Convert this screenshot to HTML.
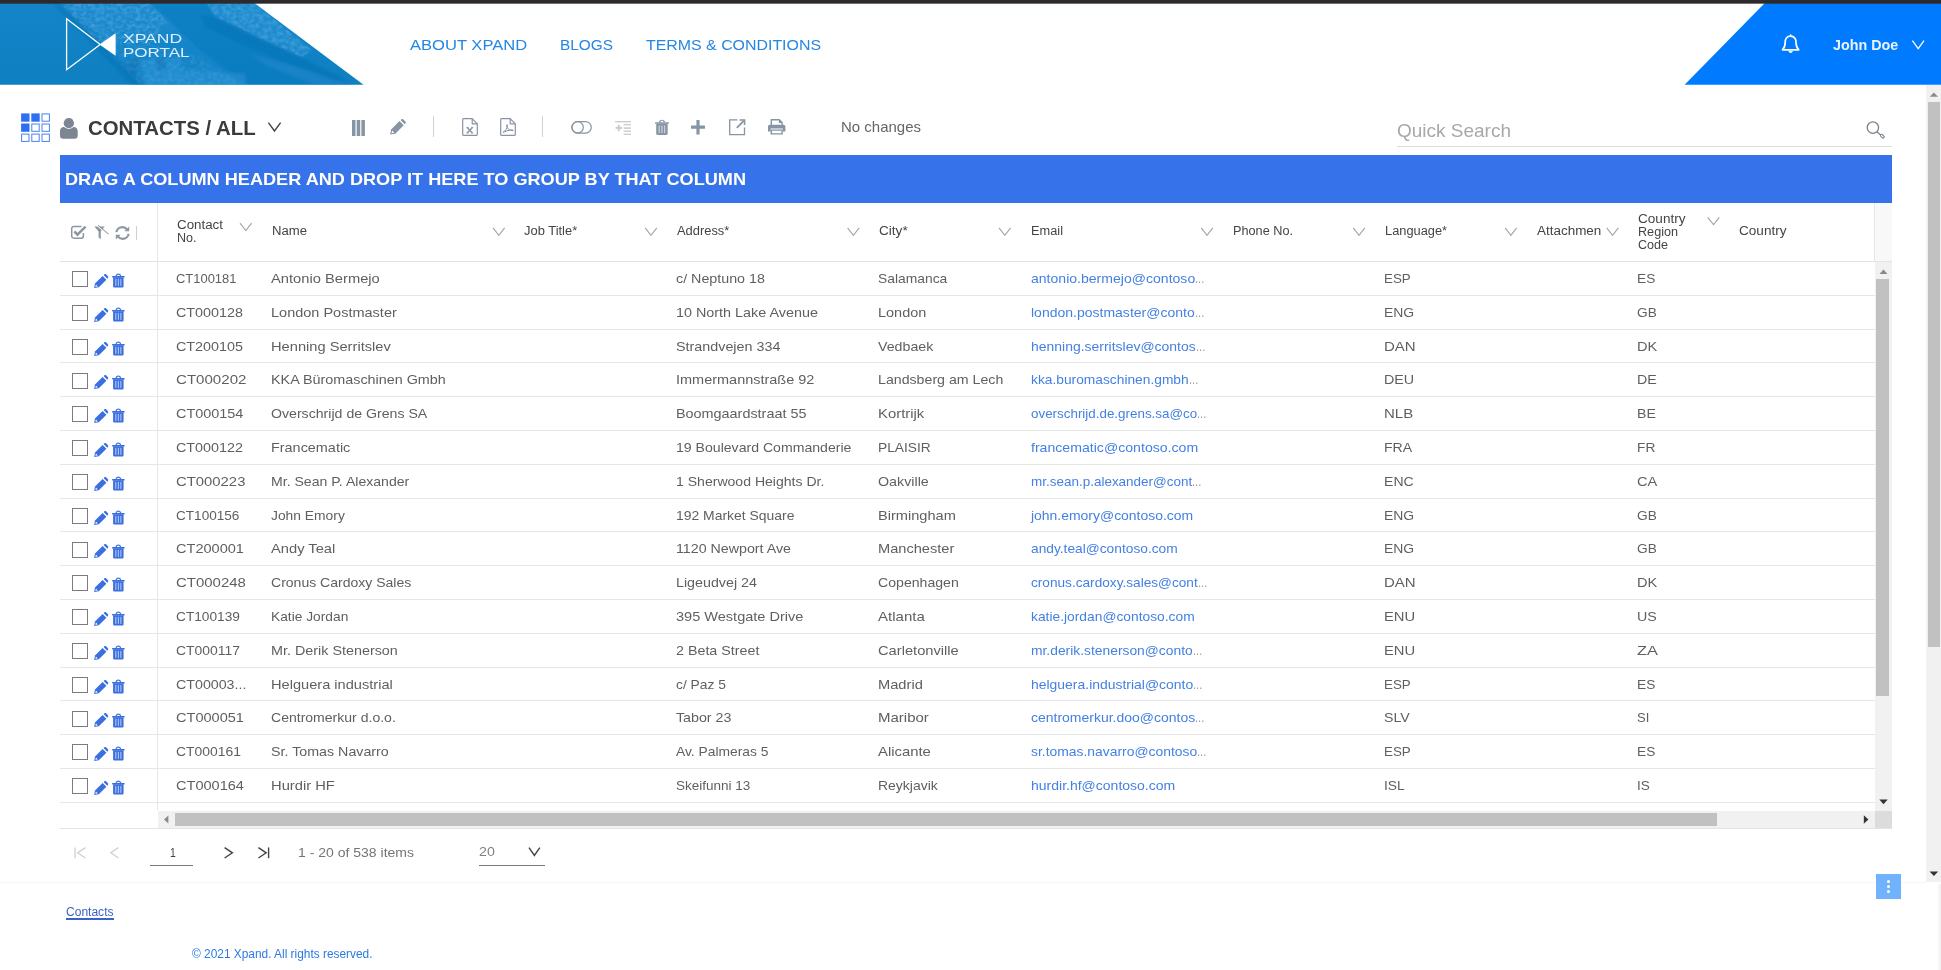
<!DOCTYPE html><html><head><meta charset="utf-8"><title>Contacts</title><style>
html,body{margin:0;padding:0;background:#fff;}html{width:1941px;height:970px;overflow:hidden;}
body{width:1941px;height:970px;overflow:hidden;position:relative;font-family:"Liberation Sans", sans-serif;}
.a{position:absolute;}
.t{position:absolute;white-space:nowrap;line-height:1;transform-origin:0 0;}
svg{position:absolute;overflow:visible;}
</style></head><body>
<svg style="left:0;top:0" width="370" height="86" viewBox="0 0 370 86">
<defs><clipPath id="hc"><polygon points="0,2 253.1,2 363.5,84.8 0,84.8"/></clipPath>
<linearGradient id="hg" x1="0" x2="0" y1="0" y2="1"><stop offset="0" stop-color="#1485c8"/><stop offset="1" stop-color="#0e7fc1"/></linearGradient>
<filter id="sp" x="0" y="0" width="100%" height="100%"><feTurbulence type="fractalNoise" baseFrequency="0.22 0.28" numOctaves="2" seed="7" result="n"/>
<feColorMatrix in="n" type="matrix" values="0 0 0 0 0.35  0 0 0 0 0.66  0 0 0 0 0.92  0 0 0 1.8 -0.62" result="c"/>
<feComposite in="c" in2="SourceAlpha" operator="in"/></filter>
<linearGradient id="bandg" x1="0" x2="0" y1="0" y2="1"><stop offset="0" stop-color="#2b94db" stop-opacity="0.42"/><stop offset="0.55" stop-color="#2590d8" stop-opacity="0.2"/><stop offset="1" stop-color="#2590d8" stop-opacity="0.3"/></linearGradient><filter id="bl"><feGaussianBlur stdDeviation="1.6"/></filter>
</defs>
<g clip-path="url(#hc)">
<rect x="0" y="0" width="370" height="86" fill="url(#hg)"/>
<g filter="url(#bl)">
<polygon points="57,3 150,3 170,22 200,50 245,86 142,86" fill="url(#bandg)"/>
<polygon points="52,3 62,3 148,86 132,86" fill="#0a73b6" opacity="0.5"/>
<polygon points="150,3 205,3 215,16 260,38 300,56 345,80 352,86 250,86 200,50 170,22" fill="#0c78bc" opacity="0.3"/>
<polygon points="207,3 254,3 280,24 312,50 302,57 260,38 215,16" fill="#2f97dc" opacity="0.42"/>
<polygon points="200,14 215,17 260,39 300,57 346,80 336,82 290,64 240,44 206,28" fill="#0a70b2" opacity="0.42"/>
<polygon points="250,54 300,68 352,86 318,86 268,66" fill="#2a90d6" opacity="0.3"/>
<polygon points="140,60 176,58 184,70 245,74 246,86 146,86" fill="#2f98dd" opacity="0.4"/>
<rect x="128" y="58" width="11" height="16" fill="#0b6fb0" opacity="0.5"/>
<rect x="156" y="58" width="10" height="12" fill="#0b6fb0" opacity="0.5"/>
</g>
<polygon points="60,3 150,3 168,22 150,44 100,44" filter="url(#sp)" opacity="0.34"/>
<polygon points="100,44 150,44 200,56 245,86 142,86" filter="url(#sp)" opacity="0.16"/>
<polygon points="207,3 254,3 280,24 312,50 302,57 260,38 215,16" filter="url(#sp)" opacity="0.32"/>
</g>
<polygon points="66.6,18.8 66.6,69.8 100.2,44.4" fill="none" stroke="#fff" stroke-width="1.3" stroke-linejoin="miter"/>
<polygon points="99.5,44.4 115.6,33.2 115.6,55.8" fill="#fff"/>
</svg>
<svg style="left:1680px;top:0" width="261" height="86" viewBox="0 0 261 86">
<polygon points="85.8,2 261,2 261,84.8 4.6,84.8" fill="#007bff"/>
<!-- bell -->
<g transform="translate(101.6,34.6)" fill="none" stroke="#fff" stroke-width="1.7" stroke-linejoin="round" stroke-linecap="round">
<path d="M9 1.6 C5.2 1.6 3.6 4.6 3.6 7.6 C3.6 11.2 2.6 13.4 0.9 15.2 L17.1 15.2 C15.4 13.4 14.4 11.2 14.4 7.6 C14.4 4.6 12.8 1.6 9 1.6 Z"/>
<path d="M9 1.4 L9 0.6"/>
<path d="M6.8 16.4 C7.2 18.9 10.8 18.9 11.2 16.4 Z" fill="#fff" stroke="none"/>
</g>
<!-- chevron -->
<polyline points="232.4,40.6 238.2,48.6 244,40.6" fill="none" stroke="#fff" stroke-width="1.3"/>
</svg>
<div class="a" style="left:0;top:0;width:1941px;height:3px;background:#2e2a2b"></div><div class="a" style="left:0;top:3px;width:1941px;height:1px;background:rgba(46,42,43,0.68)"></div>
<svg style="left:0;top:0" width="60" height="150"><rect x="21.1" y="113.4" width="8.4" height="8.3" fill="#2f6fed"/><rect x="31.3" y="113.4" width="8.4" height="8.3" fill="#2f6fed"/><rect x="42.0" y="113.9" width="7.4" height="7.3" fill="#fff" stroke="#4a82f0" stroke-width="1"/><rect x="21.1" y="123.5" width="8.4" height="8.3" fill="#2f6fed"/><rect x="31.8" y="124.0" width="7.4" height="7.3" fill="#fff" stroke="#4a82f0" stroke-width="1"/><rect x="42.0" y="124.0" width="7.4" height="7.3" fill="#fff" stroke="#4a82f0" stroke-width="1"/><rect x="21.6" y="134.1" width="7.4" height="7.3" fill="#fff" stroke="#4a82f0" stroke-width="1"/><rect x="31.8" y="134.1" width="7.4" height="7.3" fill="#fff" stroke="#4a82f0" stroke-width="1"/><rect x="42.0" y="134.1" width="7.4" height="7.3" fill="#fff" stroke="#4a82f0" stroke-width="1"/></svg>
<svg style="left:59.5px;top:117.5px" width="17.7" height="20.8" viewBox="0 0 18 21" fill="#7c8592">
<circle cx="9" cy="5.2" r="5.2"/>
<path d="M0 13.6 C0 10.4 2.2 9.2 4.2 9.2 C5.4 10.4 7.2 11 9 11 C10.8 11 12.6 10.4 13.8 9.2 C15.8 9.2 18 10.4 18 13.6 L18 18 C18 19.8 16.8 21 15 21 L3 21 C1.2 21 0 19.8 0 18 Z"/>
</svg>
<svg style="left:0;top:0" width="300" height="150"><polyline points="268.4,122.6 274.5,131 280.6,122.6" fill="none" stroke="#444" stroke-width="1.4"/></svg>
<svg style="left:352.3px;top:119.5px" width="13" height="16" fill="#8794a4"><rect x="0" y="0" width="3.5" height="16"/><rect x="4.7" y="0" width="3.5" height="16"/><rect x="9.4" y="0" width="3.5" height="16"/></svg>
<svg style="left:390.2px;top:119.3px" width="15.8" height="15.8" viewBox="0 0 16 16" fill="#8794a4"><path d="M0.2 15.8 L1.1 10.6 L9.6 2.1 L13.9 6.4 L5.4 14.9 Z"/><path d="M10.7 1.1 L11.7 0.3 C12.2 -0.1 13 -0.1 13.5 0.4 L15.6 2.5 C16.1 3 16.1 3.8 15.7 4.3 L14.9 5.3 Z"/><path d="M2.1 11.7 L4.3 13.9 L1.6 14.4 Z" fill="#fff"/></svg>
<div class="a" style="left:433px;top:116.4px;width:1px;height:21px;background:#d2d2d2"></div>
<div class="a" style="left:542.4px;top:116.4px;width:1px;height:21px;background:#d2d2d2"></div>
<svg style="left:461.9px;top:118.1px" width="16" height="18" viewBox="0 0 16 18" fill="none" stroke="#8794a4" stroke-width="1.2" stroke-linejoin="round"><path d="M1.5 0.7 L10.2 0.7 L15.3 5.8 L15.3 16.5 Q15.3 17.3 14.5 17.3 L1.5 17.3 Q0.7 17.3 0.7 16.5 L0.7 1.5 Q0.7 0.7 1.5 0.7 Z"/><path d="M10.2 0.7 L10.2 5.8 L15.3 5.8"/><path d="M5.2 9.4 L10.4 15 M10.4 9.4 L5.2 15" stroke-width="1.4"/><path d="M4.4 9.4 L6.6 9.4 M9.2 9.4 L11.2 9.4 M4.4 15 L6.6 15 M9.2 15 L11.2 15" stroke-width="0.9"/></svg>
<svg style="left:499.8px;top:118.1px" width="16" height="18" viewBox="0 0 16 18" fill="none" stroke="#8794a4" stroke-width="1.2" stroke-linejoin="round"><path d="M1.5 0.7 L10.2 0.7 L15.3 5.8 L15.3 16.5 Q15.3 17.3 14.5 17.3 L1.5 17.3 Q0.7 17.3 0.7 16.5 L0.7 1.5 Q0.7 0.7 1.5 0.7 Z"/><path d="M10.2 0.7 L10.2 5.8 L15.3 5.8"/><path d="M3 14.4 C5.4 13 7.4 10 7.6 7.4 C7.6 6.2 6.4 6.4 6.6 7.8 C7 10.4 9.4 12.8 13 12.6 C13.8 12.2 12.8 11.6 11.4 11.8 C8.4 12.2 5.4 13.2 3 14.4 Z" stroke-width="1"/></svg>
<svg style="left:571px;top:120.6px" width="21.2" height="13.2" viewBox="0 0 22 14" fill="none" stroke="#8794a4" stroke-width="1.3"><rect x="0.7" y="0.7" width="20.6" height="12.1" rx="6.05"/><circle cx="6.8" cy="6.75" r="6.05"/></svg>
<svg style="left:615.1px;top:120.7px" width="16" height="14" viewBox="0 0 16 14" fill="#c9ced4"><rect x="0" y="0" width="16" height="1.4"/><rect x="8.6" y="2.9" width="7.4" height="1.4"/><rect x="8.6" y="6.3" width="7.4" height="1.6"/><rect x="8.6" y="9.5" width="7.4" height="1.4"/><rect x="8.6" y="12.6" width="7.4" height="1.4"/><rect x="0.6" y="5.9" width="6.4" height="2"/><rect x="2.8" y="3.7" width="2" height="6.4"/></svg>
<svg style="left:655.1px;top:119.0px" width="13.9" height="15.9" viewBox="0 0 12.6 15" preserveAspectRatio="none" fill="#8794a4"><path d="M3.5 3.3 C3.5 -0.3 9.1 -0.3 9.1 3.3 L7.9 3.3 C7.9 1.2 4.7 1.2 4.7 3.3 Z"/><rect x="0" y="3" width="12.6" height="1.6" rx="0.5"/><path d="M1.1 4.5 L11.5 4.5 L11.5 13.6 C11.5 14.4 10.9 15 10.1 15 L2.5 15 C1.7 15 1.1 14.4 1.1 13.6 Z"/><rect x="3.3" y="6.1" width="1" height="7.2" fill="#fff" opacity="0.65"/><rect x="5.8" y="6.1" width="1" height="7.2" fill="#fff" opacity="0.65"/><rect x="8.3" y="6.1" width="1" height="7.2" fill="#fff" opacity="0.65"/></svg>
<svg style="left:691.2px;top:119.7px" width="14" height="14.4" viewBox="0 0 14 14.4" fill="#8794a4"><rect x="5.4" y="0" width="3.2" height="14.4" rx="0.5"/><rect x="0" y="5.6" width="14" height="3.2" rx="0.5"/></svg>
<svg style="left:728.6px;top:119.2px" width="16.4" height="16.4" viewBox="0 0 16.4 16.4" fill="none" stroke="#8794a4" stroke-width="1.3"><path d="M8.4 0.9 L0.7 0.9 L0.7 15.7 L15.5 15.7 L15.5 8.4"/><path d="M7.8 8.8 L14.8 1.8" stroke-width="1.7"/><path d="M10.6 0.9 L15.6 0.9 L15.6 5.9" stroke-width="1.5"/></svg>
<svg style="left:768px;top:119.2px" width="17.4" height="15.6" viewBox="0 0 17.4 15.6" fill="#8794a4">
<path d="M2.6 0 L11.6 0 L14.8 3.2 L14.8 6.4 L13.4 6.4 L13.4 3.9 L10.9 3.9 L10.9 1.4 L4 1.4 L4 6.4 L2.6 6.4 Z"/>
<path d="M1.8 5.8 L15.6 5.8 C16.6 5.8 17.4 6.6 17.4 7.6 L17.4 12.4 L14.8 12.4 L14.8 9.6 L2.6 9.6 L2.6 12.4 L0 12.4 L0 7.6 C0 6.6 0.8 5.8 1.8 5.8 Z"/>
<path d="M2.6 10.4 L14.8 10.4 L14.8 15.6 L2.6 15.6 Z M4 11.8 L4 14.2 L13.4 14.2 L13.4 11.8 Z" fill-rule="evenodd"/>
</svg>
<div class="a" style="left:1396.5px;top:145.6px;width:495.5px;height:1.2px;background:#dcdcdc"></div>
<svg style="left:1866px;top:120.4px" width="20" height="19" viewBox="0 0 20 19" fill="none" stroke="#75828a" stroke-width="1.3"><circle cx="6.9" cy="7.6" r="5.7"/><path d="M11 11.7 L14.4 14.9" /><ellipse cx="16.3" cy="16.2" rx="2.3" ry="1.25" transform="rotate(42 16.3 16.2)" stroke-width="1.1"/></svg>
<div class="a" style="left:60px;top:155px;width:1832.4px;height:48.2px;background:#3672e9"></div>
<div class="a" style="left:1875px;top:203.2px;width:17px;height:58px;background:#f8f8f8"></div>
<div class="a" style="left:1874.2px;top:203.2px;width:1px;height:58px;background:#e6e6e6"></div>
<div class="a" style="left:60px;top:260.8px;width:1832px;height:1.4px;background:#e2e2e2"></div>
<div class="a" style="left:157px;top:203.2px;width:1px;height:607px;background:#e6e6e6"></div>
<svg style="left:71px;top:225.2px" width="16" height="14" viewBox="0 0 16 14" fill="none" stroke="#8d97a2">
<path d="M12.4 8 L12.4 11 C12.4 12.3 11.6 13.2 10.2 13.2 L2.9 13.2 C1.6 13.2 0.7 12.3 0.7 11 L0.7 3.6 C0.7 2.3 1.6 1.4 2.9 1.4 L10.4 1.4" stroke-width="1.5"/>
<path d="M3.4 6.4 L6.4 9.6 L14.6 1.6" stroke-width="2.6"/></svg>
<svg style="left:94.4px;top:225px" width="15" height="15" viewBox="0 0 15 15" fill="#8d97a2" stroke="none">
<path d="M0.4 1.6 L10.6 1.6 L6.8 6.4 L6.8 14.2 L4.6 12.4 L4.6 6.4 Z"/>
<path d="M3.6 0.2 L14.6 9.6 L13.9 10.4 L2.9 1 Z" fill="#fff"/>
<path d="M4.4 0 L14.8 8.8 L14.3 9.5 L3.8 0.7 Z"/>
</svg>
<svg style="left:114.8px;top:226px" width="15" height="14" viewBox="0 0 15 14" fill="none" stroke="#8d97a2" stroke-width="2.2">
<path d="M1.4 6.2 C1.8 3.2 4.4 1.2 7.4 1.2 C9.4 1.2 11 2 12.2 3.6"/>
<path d="M13.6 7.8 C13.2 10.8 10.6 12.8 7.6 12.8 C5.6 12.8 4 12 2.8 10.4"/>
<path d="M14.2 0.4 L14.2 5.2 L9.4 5.2 Z" fill="#8d97a2" stroke="none"/>
<path d="M0.8 13.6 L0.8 8.8 L5.6 8.8 Z" fill="#8d97a2" stroke="none"/>
</svg>
<div class="a" style="left:135.6px;top:225.8px;width:1px;height:13.8px;background:#cfcfcf"></div>
<svg style="left:0;top:0" width="1941" height="270"><polyline points="240.0,223.1 245.8,230.5 251.6,223.1" fill="none" stroke="#a4a4a4" stroke-width="1.1"/><polyline points="493.0,227.9 498.8,235.3 504.6,227.9" fill="none" stroke="#a4a4a4" stroke-width="1.1"/><polyline points="645.2,227.9 651.0,235.3 656.8,227.9" fill="none" stroke="#a4a4a4" stroke-width="1.1"/><polyline points="847.6,227.9 853.4,235.3 859.2,227.9" fill="none" stroke="#a4a4a4" stroke-width="1.1"/><polyline points="999.0,227.9 1004.8,235.3 1010.6,227.9" fill="none" stroke="#a4a4a4" stroke-width="1.1"/><polyline points="1201.2,227.9 1207.0,235.3 1212.8,227.9" fill="none" stroke="#a4a4a4" stroke-width="1.1"/><polyline points="1353.2,227.9 1359.0,235.3 1364.8,227.9" fill="none" stroke="#a4a4a4" stroke-width="1.1"/><polyline points="1505.1,227.9 1510.9,235.3 1516.7,227.9" fill="none" stroke="#a4a4a4" stroke-width="1.1"/><polyline points="1606.7,227.9 1612.5,235.3 1618.3,227.9" fill="none" stroke="#a4a4a4" stroke-width="1.1"/><polyline points="1707.7,217.3 1713.5,224.7 1719.3,217.3" fill="none" stroke="#a4a4a4" stroke-width="1.1"/></svg>
<div class="a" style="left:60px;top:294.7px;width:1814.5px;height:1.2px;background:#e6e6e6"></div>
<svg style="left:71px;top:270.0px" width="18" height="18"><rect x="1.5" y="1.5" width="15" height="15" fill="#fff" stroke="#7c7c7c" stroke-width="1"/></svg>
<svg style="left:93.8px;top:273.9px" width="14.3" height="14.3" viewBox="0 0 16 16" fill="#3b6fe0"><path d="M0.2 15.8 L1.1 10.6 L9.6 2.1 L13.9 6.4 L5.4 14.9 Z"/><path d="M10.7 1.1 L11.7 0.3 C12.2 -0.1 13 -0.1 13.5 0.4 L15.6 2.5 C16.1 3 16.1 3.8 15.7 4.3 L14.9 5.3 Z"/><path d="M2.1 11.7 L4.3 13.9 L1.6 14.4 Z" fill="#fff"/></svg>
<svg style="left:112.3px;top:273.2px" width="12.7" height="14.5" viewBox="0 0 12.6 15" preserveAspectRatio="none" fill="#3b6fe0"><path d="M3.5 3.3 C3.5 -0.3 9.1 -0.3 9.1 3.3 L7.9 3.3 C7.9 1.2 4.7 1.2 4.7 3.3 Z"/><rect x="0" y="3" width="12.6" height="1.6" rx="0.5"/><path d="M1.1 4.5 L11.5 4.5 L11.5 13.6 C11.5 14.4 10.9 15 10.1 15 L2.5 15 C1.7 15 1.1 14.4 1.1 13.6 Z"/><rect x="3.3" y="6.1" width="1" height="7.2" fill="#fff" opacity="0.65"/><rect x="5.8" y="6.1" width="1" height="7.2" fill="#fff" opacity="0.65"/><rect x="8.3" y="6.1" width="1" height="7.2" fill="#fff" opacity="0.65"/></svg>
<div class="a" style="left:60px;top:328.5px;width:1814.5px;height:1.2px;background:#e6e6e6"></div>
<svg style="left:71px;top:304.0px" width="18" height="18"><rect x="1.5" y="1.5" width="15" height="15" fill="#fff" stroke="#7c7c7c" stroke-width="1"/></svg>
<svg style="left:93.8px;top:307.7px" width="14.3" height="14.3" viewBox="0 0 16 16" fill="#3b6fe0"><path d="M0.2 15.8 L1.1 10.6 L9.6 2.1 L13.9 6.4 L5.4 14.9 Z"/><path d="M10.7 1.1 L11.7 0.3 C12.2 -0.1 13 -0.1 13.5 0.4 L15.6 2.5 C16.1 3 16.1 3.8 15.7 4.3 L14.9 5.3 Z"/><path d="M2.1 11.7 L4.3 13.9 L1.6 14.4 Z" fill="#fff"/></svg>
<svg style="left:112.3px;top:307.0px" width="12.7" height="14.5" viewBox="0 0 12.6 15" preserveAspectRatio="none" fill="#3b6fe0"><path d="M3.5 3.3 C3.5 -0.3 9.1 -0.3 9.1 3.3 L7.9 3.3 C7.9 1.2 4.7 1.2 4.7 3.3 Z"/><rect x="0" y="3" width="12.6" height="1.6" rx="0.5"/><path d="M1.1 4.5 L11.5 4.5 L11.5 13.6 C11.5 14.4 10.9 15 10.1 15 L2.5 15 C1.7 15 1.1 14.4 1.1 13.6 Z"/><rect x="3.3" y="6.1" width="1" height="7.2" fill="#fff" opacity="0.65"/><rect x="5.8" y="6.1" width="1" height="7.2" fill="#fff" opacity="0.65"/><rect x="8.3" y="6.1" width="1" height="7.2" fill="#fff" opacity="0.65"/></svg>
<div class="a" style="left:60px;top:362.3px;width:1814.5px;height:1.2px;background:#e6e6e6"></div>
<svg style="left:71px;top:338.0px" width="18" height="18"><rect x="1.5" y="1.5" width="15" height="15" fill="#fff" stroke="#7c7c7c" stroke-width="1"/></svg>
<svg style="left:93.8px;top:341.5px" width="14.3" height="14.3" viewBox="0 0 16 16" fill="#3b6fe0"><path d="M0.2 15.8 L1.1 10.6 L9.6 2.1 L13.9 6.4 L5.4 14.9 Z"/><path d="M10.7 1.1 L11.7 0.3 C12.2 -0.1 13 -0.1 13.5 0.4 L15.6 2.5 C16.1 3 16.1 3.8 15.7 4.3 L14.9 5.3 Z"/><path d="M2.1 11.7 L4.3 13.9 L1.6 14.4 Z" fill="#fff"/></svg>
<svg style="left:112.3px;top:340.8px" width="12.7" height="14.5" viewBox="0 0 12.6 15" preserveAspectRatio="none" fill="#3b6fe0"><path d="M3.5 3.3 C3.5 -0.3 9.1 -0.3 9.1 3.3 L7.9 3.3 C7.9 1.2 4.7 1.2 4.7 3.3 Z"/><rect x="0" y="3" width="12.6" height="1.6" rx="0.5"/><path d="M1.1 4.5 L11.5 4.5 L11.5 13.6 C11.5 14.4 10.9 15 10.1 15 L2.5 15 C1.7 15 1.1 14.4 1.1 13.6 Z"/><rect x="3.3" y="6.1" width="1" height="7.2" fill="#fff" opacity="0.65"/><rect x="5.8" y="6.1" width="1" height="7.2" fill="#fff" opacity="0.65"/><rect x="8.3" y="6.1" width="1" height="7.2" fill="#fff" opacity="0.65"/></svg>
<div class="a" style="left:60px;top:396.1px;width:1814.5px;height:1.2px;background:#e6e6e6"></div>
<svg style="left:71px;top:372.0px" width="18" height="18"><rect x="1.5" y="1.5" width="15" height="15" fill="#fff" stroke="#7c7c7c" stroke-width="1"/></svg>
<svg style="left:93.8px;top:375.3px" width="14.3" height="14.3" viewBox="0 0 16 16" fill="#3b6fe0"><path d="M0.2 15.8 L1.1 10.6 L9.6 2.1 L13.9 6.4 L5.4 14.9 Z"/><path d="M10.7 1.1 L11.7 0.3 C12.2 -0.1 13 -0.1 13.5 0.4 L15.6 2.5 C16.1 3 16.1 3.8 15.7 4.3 L14.9 5.3 Z"/><path d="M2.1 11.7 L4.3 13.9 L1.6 14.4 Z" fill="#fff"/></svg>
<svg style="left:112.3px;top:374.6px" width="12.7" height="14.5" viewBox="0 0 12.6 15" preserveAspectRatio="none" fill="#3b6fe0"><path d="M3.5 3.3 C3.5 -0.3 9.1 -0.3 9.1 3.3 L7.9 3.3 C7.9 1.2 4.7 1.2 4.7 3.3 Z"/><rect x="0" y="3" width="12.6" height="1.6" rx="0.5"/><path d="M1.1 4.5 L11.5 4.5 L11.5 13.6 C11.5 14.4 10.9 15 10.1 15 L2.5 15 C1.7 15 1.1 14.4 1.1 13.6 Z"/><rect x="3.3" y="6.1" width="1" height="7.2" fill="#fff" opacity="0.65"/><rect x="5.8" y="6.1" width="1" height="7.2" fill="#fff" opacity="0.65"/><rect x="8.3" y="6.1" width="1" height="7.2" fill="#fff" opacity="0.65"/></svg>
<div class="a" style="left:60px;top:429.9px;width:1814.5px;height:1.2px;background:#e6e6e6"></div>
<svg style="left:71px;top:405.0px" width="18" height="18"><rect x="1.5" y="1.5" width="15" height="15" fill="#fff" stroke="#7c7c7c" stroke-width="1"/></svg>
<svg style="left:93.8px;top:409.1px" width="14.3" height="14.3" viewBox="0 0 16 16" fill="#3b6fe0"><path d="M0.2 15.8 L1.1 10.6 L9.6 2.1 L13.9 6.4 L5.4 14.9 Z"/><path d="M10.7 1.1 L11.7 0.3 C12.2 -0.1 13 -0.1 13.5 0.4 L15.6 2.5 C16.1 3 16.1 3.8 15.7 4.3 L14.9 5.3 Z"/><path d="M2.1 11.7 L4.3 13.9 L1.6 14.4 Z" fill="#fff"/></svg>
<svg style="left:112.3px;top:408.4px" width="12.7" height="14.5" viewBox="0 0 12.6 15" preserveAspectRatio="none" fill="#3b6fe0"><path d="M3.5 3.3 C3.5 -0.3 9.1 -0.3 9.1 3.3 L7.9 3.3 C7.9 1.2 4.7 1.2 4.7 3.3 Z"/><rect x="0" y="3" width="12.6" height="1.6" rx="0.5"/><path d="M1.1 4.5 L11.5 4.5 L11.5 13.6 C11.5 14.4 10.9 15 10.1 15 L2.5 15 C1.7 15 1.1 14.4 1.1 13.6 Z"/><rect x="3.3" y="6.1" width="1" height="7.2" fill="#fff" opacity="0.65"/><rect x="5.8" y="6.1" width="1" height="7.2" fill="#fff" opacity="0.65"/><rect x="8.3" y="6.1" width="1" height="7.2" fill="#fff" opacity="0.65"/></svg>
<div class="a" style="left:60px;top:463.7px;width:1814.5px;height:1.2px;background:#e6e6e6"></div>
<svg style="left:71px;top:439.0px" width="18" height="18"><rect x="1.5" y="1.5" width="15" height="15" fill="#fff" stroke="#7c7c7c" stroke-width="1"/></svg>
<svg style="left:93.8px;top:442.9px" width="14.3" height="14.3" viewBox="0 0 16 16" fill="#3b6fe0"><path d="M0.2 15.8 L1.1 10.6 L9.6 2.1 L13.9 6.4 L5.4 14.9 Z"/><path d="M10.7 1.1 L11.7 0.3 C12.2 -0.1 13 -0.1 13.5 0.4 L15.6 2.5 C16.1 3 16.1 3.8 15.7 4.3 L14.9 5.3 Z"/><path d="M2.1 11.7 L4.3 13.9 L1.6 14.4 Z" fill="#fff"/></svg>
<svg style="left:112.3px;top:442.2px" width="12.7" height="14.5" viewBox="0 0 12.6 15" preserveAspectRatio="none" fill="#3b6fe0"><path d="M3.5 3.3 C3.5 -0.3 9.1 -0.3 9.1 3.3 L7.9 3.3 C7.9 1.2 4.7 1.2 4.7 3.3 Z"/><rect x="0" y="3" width="12.6" height="1.6" rx="0.5"/><path d="M1.1 4.5 L11.5 4.5 L11.5 13.6 C11.5 14.4 10.9 15 10.1 15 L2.5 15 C1.7 15 1.1 14.4 1.1 13.6 Z"/><rect x="3.3" y="6.1" width="1" height="7.2" fill="#fff" opacity="0.65"/><rect x="5.8" y="6.1" width="1" height="7.2" fill="#fff" opacity="0.65"/><rect x="8.3" y="6.1" width="1" height="7.2" fill="#fff" opacity="0.65"/></svg>
<div class="a" style="left:60px;top:497.5px;width:1814.5px;height:1.2px;background:#e6e6e6"></div>
<svg style="left:71px;top:473.0px" width="18" height="18"><rect x="1.5" y="1.5" width="15" height="15" fill="#fff" stroke="#7c7c7c" stroke-width="1"/></svg>
<svg style="left:93.8px;top:476.7px" width="14.3" height="14.3" viewBox="0 0 16 16" fill="#3b6fe0"><path d="M0.2 15.8 L1.1 10.6 L9.6 2.1 L13.9 6.4 L5.4 14.9 Z"/><path d="M10.7 1.1 L11.7 0.3 C12.2 -0.1 13 -0.1 13.5 0.4 L15.6 2.5 C16.1 3 16.1 3.8 15.7 4.3 L14.9 5.3 Z"/><path d="M2.1 11.7 L4.3 13.9 L1.6 14.4 Z" fill="#fff"/></svg>
<svg style="left:112.3px;top:476.0px" width="12.7" height="14.5" viewBox="0 0 12.6 15" preserveAspectRatio="none" fill="#3b6fe0"><path d="M3.5 3.3 C3.5 -0.3 9.1 -0.3 9.1 3.3 L7.9 3.3 C7.9 1.2 4.7 1.2 4.7 3.3 Z"/><rect x="0" y="3" width="12.6" height="1.6" rx="0.5"/><path d="M1.1 4.5 L11.5 4.5 L11.5 13.6 C11.5 14.4 10.9 15 10.1 15 L2.5 15 C1.7 15 1.1 14.4 1.1 13.6 Z"/><rect x="3.3" y="6.1" width="1" height="7.2" fill="#fff" opacity="0.65"/><rect x="5.8" y="6.1" width="1" height="7.2" fill="#fff" opacity="0.65"/><rect x="8.3" y="6.1" width="1" height="7.2" fill="#fff" opacity="0.65"/></svg>
<div class="a" style="left:60px;top:531.3px;width:1814.5px;height:1.2px;background:#e6e6e6"></div>
<svg style="left:71px;top:507.0px" width="18" height="18"><rect x="1.5" y="1.5" width="15" height="15" fill="#fff" stroke="#7c7c7c" stroke-width="1"/></svg>
<svg style="left:93.8px;top:510.5px" width="14.3" height="14.3" viewBox="0 0 16 16" fill="#3b6fe0"><path d="M0.2 15.8 L1.1 10.6 L9.6 2.1 L13.9 6.4 L5.4 14.9 Z"/><path d="M10.7 1.1 L11.7 0.3 C12.2 -0.1 13 -0.1 13.5 0.4 L15.6 2.5 C16.1 3 16.1 3.8 15.7 4.3 L14.9 5.3 Z"/><path d="M2.1 11.7 L4.3 13.9 L1.6 14.4 Z" fill="#fff"/></svg>
<svg style="left:112.3px;top:509.8px" width="12.7" height="14.5" viewBox="0 0 12.6 15" preserveAspectRatio="none" fill="#3b6fe0"><path d="M3.5 3.3 C3.5 -0.3 9.1 -0.3 9.1 3.3 L7.9 3.3 C7.9 1.2 4.7 1.2 4.7 3.3 Z"/><rect x="0" y="3" width="12.6" height="1.6" rx="0.5"/><path d="M1.1 4.5 L11.5 4.5 L11.5 13.6 C11.5 14.4 10.9 15 10.1 15 L2.5 15 C1.7 15 1.1 14.4 1.1 13.6 Z"/><rect x="3.3" y="6.1" width="1" height="7.2" fill="#fff" opacity="0.65"/><rect x="5.8" y="6.1" width="1" height="7.2" fill="#fff" opacity="0.65"/><rect x="8.3" y="6.1" width="1" height="7.2" fill="#fff" opacity="0.65"/></svg>
<div class="a" style="left:60px;top:565.1px;width:1814.5px;height:1.2px;background:#e6e6e6"></div>
<svg style="left:71px;top:541.0px" width="18" height="18"><rect x="1.5" y="1.5" width="15" height="15" fill="#fff" stroke="#7c7c7c" stroke-width="1"/></svg>
<svg style="left:93.8px;top:544.3px" width="14.3" height="14.3" viewBox="0 0 16 16" fill="#3b6fe0"><path d="M0.2 15.8 L1.1 10.6 L9.6 2.1 L13.9 6.4 L5.4 14.9 Z"/><path d="M10.7 1.1 L11.7 0.3 C12.2 -0.1 13 -0.1 13.5 0.4 L15.6 2.5 C16.1 3 16.1 3.8 15.7 4.3 L14.9 5.3 Z"/><path d="M2.1 11.7 L4.3 13.9 L1.6 14.4 Z" fill="#fff"/></svg>
<svg style="left:112.3px;top:543.6px" width="12.7" height="14.5" viewBox="0 0 12.6 15" preserveAspectRatio="none" fill="#3b6fe0"><path d="M3.5 3.3 C3.5 -0.3 9.1 -0.3 9.1 3.3 L7.9 3.3 C7.9 1.2 4.7 1.2 4.7 3.3 Z"/><rect x="0" y="3" width="12.6" height="1.6" rx="0.5"/><path d="M1.1 4.5 L11.5 4.5 L11.5 13.6 C11.5 14.4 10.9 15 10.1 15 L2.5 15 C1.7 15 1.1 14.4 1.1 13.6 Z"/><rect x="3.3" y="6.1" width="1" height="7.2" fill="#fff" opacity="0.65"/><rect x="5.8" y="6.1" width="1" height="7.2" fill="#fff" opacity="0.65"/><rect x="8.3" y="6.1" width="1" height="7.2" fill="#fff" opacity="0.65"/></svg>
<div class="a" style="left:60px;top:598.9px;width:1814.5px;height:1.2px;background:#e6e6e6"></div>
<svg style="left:71px;top:574.0px" width="18" height="18"><rect x="1.5" y="1.5" width="15" height="15" fill="#fff" stroke="#7c7c7c" stroke-width="1"/></svg>
<svg style="left:93.8px;top:578.1px" width="14.3" height="14.3" viewBox="0 0 16 16" fill="#3b6fe0"><path d="M0.2 15.8 L1.1 10.6 L9.6 2.1 L13.9 6.4 L5.4 14.9 Z"/><path d="M10.7 1.1 L11.7 0.3 C12.2 -0.1 13 -0.1 13.5 0.4 L15.6 2.5 C16.1 3 16.1 3.8 15.7 4.3 L14.9 5.3 Z"/><path d="M2.1 11.7 L4.3 13.9 L1.6 14.4 Z" fill="#fff"/></svg>
<svg style="left:112.3px;top:577.4px" width="12.7" height="14.5" viewBox="0 0 12.6 15" preserveAspectRatio="none" fill="#3b6fe0"><path d="M3.5 3.3 C3.5 -0.3 9.1 -0.3 9.1 3.3 L7.9 3.3 C7.9 1.2 4.7 1.2 4.7 3.3 Z"/><rect x="0" y="3" width="12.6" height="1.6" rx="0.5"/><path d="M1.1 4.5 L11.5 4.5 L11.5 13.6 C11.5 14.4 10.9 15 10.1 15 L2.5 15 C1.7 15 1.1 14.4 1.1 13.6 Z"/><rect x="3.3" y="6.1" width="1" height="7.2" fill="#fff" opacity="0.65"/><rect x="5.8" y="6.1" width="1" height="7.2" fill="#fff" opacity="0.65"/><rect x="8.3" y="6.1" width="1" height="7.2" fill="#fff" opacity="0.65"/></svg>
<div class="a" style="left:60px;top:632.7px;width:1814.5px;height:1.2px;background:#e6e6e6"></div>
<svg style="left:71px;top:608.0px" width="18" height="18"><rect x="1.5" y="1.5" width="15" height="15" fill="#fff" stroke="#7c7c7c" stroke-width="1"/></svg>
<svg style="left:93.8px;top:611.9px" width="14.3" height="14.3" viewBox="0 0 16 16" fill="#3b6fe0"><path d="M0.2 15.8 L1.1 10.6 L9.6 2.1 L13.9 6.4 L5.4 14.9 Z"/><path d="M10.7 1.1 L11.7 0.3 C12.2 -0.1 13 -0.1 13.5 0.4 L15.6 2.5 C16.1 3 16.1 3.8 15.7 4.3 L14.9 5.3 Z"/><path d="M2.1 11.7 L4.3 13.9 L1.6 14.4 Z" fill="#fff"/></svg>
<svg style="left:112.3px;top:611.2px" width="12.7" height="14.5" viewBox="0 0 12.6 15" preserveAspectRatio="none" fill="#3b6fe0"><path d="M3.5 3.3 C3.5 -0.3 9.1 -0.3 9.1 3.3 L7.9 3.3 C7.9 1.2 4.7 1.2 4.7 3.3 Z"/><rect x="0" y="3" width="12.6" height="1.6" rx="0.5"/><path d="M1.1 4.5 L11.5 4.5 L11.5 13.6 C11.5 14.4 10.9 15 10.1 15 L2.5 15 C1.7 15 1.1 14.4 1.1 13.6 Z"/><rect x="3.3" y="6.1" width="1" height="7.2" fill="#fff" opacity="0.65"/><rect x="5.8" y="6.1" width="1" height="7.2" fill="#fff" opacity="0.65"/><rect x="8.3" y="6.1" width="1" height="7.2" fill="#fff" opacity="0.65"/></svg>
<div class="a" style="left:60px;top:666.5px;width:1814.5px;height:1.2px;background:#e6e6e6"></div>
<svg style="left:71px;top:642.0px" width="18" height="18"><rect x="1.5" y="1.5" width="15" height="15" fill="#fff" stroke="#7c7c7c" stroke-width="1"/></svg>
<svg style="left:93.8px;top:645.7px" width="14.3" height="14.3" viewBox="0 0 16 16" fill="#3b6fe0"><path d="M0.2 15.8 L1.1 10.6 L9.6 2.1 L13.9 6.4 L5.4 14.9 Z"/><path d="M10.7 1.1 L11.7 0.3 C12.2 -0.1 13 -0.1 13.5 0.4 L15.6 2.5 C16.1 3 16.1 3.8 15.7 4.3 L14.9 5.3 Z"/><path d="M2.1 11.7 L4.3 13.9 L1.6 14.4 Z" fill="#fff"/></svg>
<svg style="left:112.3px;top:645.0px" width="12.7" height="14.5" viewBox="0 0 12.6 15" preserveAspectRatio="none" fill="#3b6fe0"><path d="M3.5 3.3 C3.5 -0.3 9.1 -0.3 9.1 3.3 L7.9 3.3 C7.9 1.2 4.7 1.2 4.7 3.3 Z"/><rect x="0" y="3" width="12.6" height="1.6" rx="0.5"/><path d="M1.1 4.5 L11.5 4.5 L11.5 13.6 C11.5 14.4 10.9 15 10.1 15 L2.5 15 C1.7 15 1.1 14.4 1.1 13.6 Z"/><rect x="3.3" y="6.1" width="1" height="7.2" fill="#fff" opacity="0.65"/><rect x="5.8" y="6.1" width="1" height="7.2" fill="#fff" opacity="0.65"/><rect x="8.3" y="6.1" width="1" height="7.2" fill="#fff" opacity="0.65"/></svg>
<div class="a" style="left:60px;top:700.3px;width:1814.5px;height:1.2px;background:#e6e6e6"></div>
<svg style="left:71px;top:676.0px" width="18" height="18"><rect x="1.5" y="1.5" width="15" height="15" fill="#fff" stroke="#7c7c7c" stroke-width="1"/></svg>
<svg style="left:93.8px;top:679.5px" width="14.3" height="14.3" viewBox="0 0 16 16" fill="#3b6fe0"><path d="M0.2 15.8 L1.1 10.6 L9.6 2.1 L13.9 6.4 L5.4 14.9 Z"/><path d="M10.7 1.1 L11.7 0.3 C12.2 -0.1 13 -0.1 13.5 0.4 L15.6 2.5 C16.1 3 16.1 3.8 15.7 4.3 L14.9 5.3 Z"/><path d="M2.1 11.7 L4.3 13.9 L1.6 14.4 Z" fill="#fff"/></svg>
<svg style="left:112.3px;top:678.8px" width="12.7" height="14.5" viewBox="0 0 12.6 15" preserveAspectRatio="none" fill="#3b6fe0"><path d="M3.5 3.3 C3.5 -0.3 9.1 -0.3 9.1 3.3 L7.9 3.3 C7.9 1.2 4.7 1.2 4.7 3.3 Z"/><rect x="0" y="3" width="12.6" height="1.6" rx="0.5"/><path d="M1.1 4.5 L11.5 4.5 L11.5 13.6 C11.5 14.4 10.9 15 10.1 15 L2.5 15 C1.7 15 1.1 14.4 1.1 13.6 Z"/><rect x="3.3" y="6.1" width="1" height="7.2" fill="#fff" opacity="0.65"/><rect x="5.8" y="6.1" width="1" height="7.2" fill="#fff" opacity="0.65"/><rect x="8.3" y="6.1" width="1" height="7.2" fill="#fff" opacity="0.65"/></svg>
<div class="a" style="left:60px;top:734.1px;width:1814.5px;height:1.2px;background:#e6e6e6"></div>
<svg style="left:71px;top:710.0px" width="18" height="18"><rect x="1.5" y="1.5" width="15" height="15" fill="#fff" stroke="#7c7c7c" stroke-width="1"/></svg>
<svg style="left:93.8px;top:713.3px" width="14.3" height="14.3" viewBox="0 0 16 16" fill="#3b6fe0"><path d="M0.2 15.8 L1.1 10.6 L9.6 2.1 L13.9 6.4 L5.4 14.9 Z"/><path d="M10.7 1.1 L11.7 0.3 C12.2 -0.1 13 -0.1 13.5 0.4 L15.6 2.5 C16.1 3 16.1 3.8 15.7 4.3 L14.9 5.3 Z"/><path d="M2.1 11.7 L4.3 13.9 L1.6 14.4 Z" fill="#fff"/></svg>
<svg style="left:112.3px;top:712.6px" width="12.7" height="14.5" viewBox="0 0 12.6 15" preserveAspectRatio="none" fill="#3b6fe0"><path d="M3.5 3.3 C3.5 -0.3 9.1 -0.3 9.1 3.3 L7.9 3.3 C7.9 1.2 4.7 1.2 4.7 3.3 Z"/><rect x="0" y="3" width="12.6" height="1.6" rx="0.5"/><path d="M1.1 4.5 L11.5 4.5 L11.5 13.6 C11.5 14.4 10.9 15 10.1 15 L2.5 15 C1.7 15 1.1 14.4 1.1 13.6 Z"/><rect x="3.3" y="6.1" width="1" height="7.2" fill="#fff" opacity="0.65"/><rect x="5.8" y="6.1" width="1" height="7.2" fill="#fff" opacity="0.65"/><rect x="8.3" y="6.1" width="1" height="7.2" fill="#fff" opacity="0.65"/></svg>
<div class="a" style="left:60px;top:767.9px;width:1814.5px;height:1.2px;background:#e6e6e6"></div>
<svg style="left:71px;top:743.0px" width="18" height="18"><rect x="1.5" y="1.5" width="15" height="15" fill="#fff" stroke="#7c7c7c" stroke-width="1"/></svg>
<svg style="left:93.8px;top:747.1px" width="14.3" height="14.3" viewBox="0 0 16 16" fill="#3b6fe0"><path d="M0.2 15.8 L1.1 10.6 L9.6 2.1 L13.9 6.4 L5.4 14.9 Z"/><path d="M10.7 1.1 L11.7 0.3 C12.2 -0.1 13 -0.1 13.5 0.4 L15.6 2.5 C16.1 3 16.1 3.8 15.7 4.3 L14.9 5.3 Z"/><path d="M2.1 11.7 L4.3 13.9 L1.6 14.4 Z" fill="#fff"/></svg>
<svg style="left:112.3px;top:746.4px" width="12.7" height="14.5" viewBox="0 0 12.6 15" preserveAspectRatio="none" fill="#3b6fe0"><path d="M3.5 3.3 C3.5 -0.3 9.1 -0.3 9.1 3.3 L7.9 3.3 C7.9 1.2 4.7 1.2 4.7 3.3 Z"/><rect x="0" y="3" width="12.6" height="1.6" rx="0.5"/><path d="M1.1 4.5 L11.5 4.5 L11.5 13.6 C11.5 14.4 10.9 15 10.1 15 L2.5 15 C1.7 15 1.1 14.4 1.1 13.6 Z"/><rect x="3.3" y="6.1" width="1" height="7.2" fill="#fff" opacity="0.65"/><rect x="5.8" y="6.1" width="1" height="7.2" fill="#fff" opacity="0.65"/><rect x="8.3" y="6.1" width="1" height="7.2" fill="#fff" opacity="0.65"/></svg>
<div class="a" style="left:60px;top:801.7px;width:1814.5px;height:1.2px;background:#e6e6e6"></div>
<svg style="left:71px;top:777.0px" width="18" height="18"><rect x="1.5" y="1.5" width="15" height="15" fill="#fff" stroke="#7c7c7c" stroke-width="1"/></svg>
<svg style="left:93.8px;top:780.9px" width="14.3" height="14.3" viewBox="0 0 16 16" fill="#3b6fe0"><path d="M0.2 15.8 L1.1 10.6 L9.6 2.1 L13.9 6.4 L5.4 14.9 Z"/><path d="M10.7 1.1 L11.7 0.3 C12.2 -0.1 13 -0.1 13.5 0.4 L15.6 2.5 C16.1 3 16.1 3.8 15.7 4.3 L14.9 5.3 Z"/><path d="M2.1 11.7 L4.3 13.9 L1.6 14.4 Z" fill="#fff"/></svg>
<svg style="left:112.3px;top:780.2px" width="12.7" height="14.5" viewBox="0 0 12.6 15" preserveAspectRatio="none" fill="#3b6fe0"><path d="M3.5 3.3 C3.5 -0.3 9.1 -0.3 9.1 3.3 L7.9 3.3 C7.9 1.2 4.7 1.2 4.7 3.3 Z"/><rect x="0" y="3" width="12.6" height="1.6" rx="0.5"/><path d="M1.1 4.5 L11.5 4.5 L11.5 13.6 C11.5 14.4 10.9 15 10.1 15 L2.5 15 C1.7 15 1.1 14.4 1.1 13.6 Z"/><rect x="3.3" y="6.1" width="1" height="7.2" fill="#fff" opacity="0.65"/><rect x="5.8" y="6.1" width="1" height="7.2" fill="#fff" opacity="0.65"/><rect x="8.3" y="6.1" width="1" height="7.2" fill="#fff" opacity="0.65"/></svg>
<div class="a" style="left:1874.6px;top:262.2px;width:17px;height:549px;background:#f1f1f1"></div>
<div class="a" style="left:1876.4px;top:279.4px;width:13px;height:417px;background:#c1c1c1"></div>
<svg style="left:1874.6px;top:262px" width="17" height="550"><polygon points="4.5,12 8.5,7.6 12.5,12" fill="#8a8a8a"/><polygon points="4.3,537.6 12.7,537.6 8.5,542.2" fill="#333"/></svg>
<div class="a" style="left:158px;top:811.2px;width:1716.6px;height:17px;background:#f1f1f1"></div>
<div class="a" style="left:175px;top:813.2px;width:1542px;height:12.6px;background:#c1c1c1"></div>
<div class="a" style="left:1874.6px;top:811.2px;width:17px;height:17px;background:#dcdcdc"></div>
<svg style="left:158px;top:811.2px" width="1717" height="17"><polygon points="10.4,4.4 10.4,12.6 6,8.5" fill="#8a8a8a"/><polygon points="1705.8,4.2 1705.8,12.8 1710.4,8.5" fill="#333"/></svg>
<div class="a" style="left:60px;top:828.2px;width:1832px;height:1.2px;background:#e4e4e4"></div>
<svg style="left:0;top:840px" width="600" height="30" fill="none">
<path d="M75 7.4 L75 18.2" stroke="#cfcfcf" stroke-width="1.3"/><polyline points="85.4,7.6 77.6,12.8 85.4,18" stroke="#cfcfcf" stroke-width="1.3"/>
<polyline points="118.4,7.6 110.8,12.8 118.4,18" stroke="#cfcfcf" stroke-width="1.3"/>
<polyline points="224.6,7.6 232.4,12.8 224.6,18" stroke="#444" stroke-width="1.4"/>
<polyline points="258.4,7.6 266.2,12.8 258.4,18" stroke="#444" stroke-width="1.4"/><path d="M268.6,7.4 L268.6,18.2" stroke="#444" stroke-width="1.4"/>
<polyline points="529,7.6 534.4,15.4 539.8,7.6" stroke="#444" stroke-width="1.4"/>
</svg>
<div class="a" style="left:150px;top:865.4px;width:43.4px;height:1.1px;background:#7a7a7a"></div>
<div class="a" style="left:478.6px;top:865.2px;width:66px;height:1.1px;background:#7a7a7a"></div>
<div class="a" style="left:0;top:882.4px;width:1926px;height:1px;background:#f7f7f7"></div>
<div class="a" style="left:66.2px;top:918.2px;width:47.5px;height:1.4px;background:#3a63c9"></div>
<div class="a" style="left:1925.6px;top:85px;width:15.4px;height:797.4px;background:#f1f1f1"></div>
<div class="a" style="left:1927.6px;top:102.4px;width:12.6px;height:545px;background:#c1c1c1"></div>
<svg style="left:1925.6px;top:85px" width="16" height="798"><polygon points="3.8,11.8 7.9,7.4 12,11.8" fill="#8a8a8a"/><polygon points="3.6,786.4 12.2,786.4 7.9,791" fill="#333"/></svg>
<div class="a" style="left:1937px;top:884px;width:4px;height:86px;background:linear-gradient(90deg,rgba(240,240,240,0),#efefef)"></div>
<div class="a" style="left:1876.4px;top:874px;width:25px;height:25px;background:#70b2fb"></div>
<svg style="left:1876.4px;top:874px" width="25" height="25" fill="#fff"><circle cx="12.5" cy="7.6" r="1.5"/><circle cx="12.5" cy="12.6" r="1.5"/><circle cx="12.5" cy="17.6" r="1.5"/></svg>
<div style="position:absolute;white-space:nowrap;line-height:1;left:123px;top:32.64px;font-size:12px;color:#dcefff;transform-origin:0 0;transform:scaleX(1.4634);">XPAND</div>
<div style="position:absolute;white-space:nowrap;line-height:1;left:123px;top:46.74px;font-size:12px;color:#dcefff;transform-origin:0 0;transform:scaleX(1.4199);">PORTAL</div>
<div class="t" id="t0" style="left:410.00px;top:36.80px;font-size:15px;color:#2487e2;transform:scaleX(1.1042);">ABOUT XPAND</div>
<div class="t" id="t1" style="left:560.00px;top:36.80px;font-size:15px;color:#2487e2;transform:scaleX(1.0254);">BLOGS</div>
<div class="t" id="t2" style="left:646.00px;top:36.80px;font-size:15px;color:#2487e2;transform:scaleX(1.0605);">TERMS &amp; CONDITIONS</div>
<div class="t" id="t3" style="left:1833.40px;top:36.80px;font-size:15px;color:#eaf4ff;font-weight:700;transform:scaleX(0.9555);">John Doe</div>
<div class="t" id="t4" style="left:87.90px;top:118.00px;font-size:20px;color:#3b3b3b;font-weight:700;transform:scaleX(1.0198);">CONTACTS / ALL</div>
<div class="t" id="t5" style="left:841.40px;top:119.00px;font-size:15px;color:#666666;transform:scaleX(0.9992);">No changes</div>
<div class="t" id="t6" style="left:1396.50px;top:122.00px;font-size:18.5px;color:#a8a8a8;transform:scaleX(1.0266);">Quick Search</div>
<div class="t" id="t7" style="left:64.50px;top:171.00px;font-size:17px;color:#ffffff;font-weight:700;transform:scaleX(1.0661);">DRAG A COLUMN HEADER AND DROP IT HERE TO GROUP BY THAT COLUMN</div>
<div class="t" id="t8" style="left:176.50px;top:218.80px;font-size:12.5px;color:#444444;transform:scaleX(1.0674);">Contact</div>
<div class="t" id="t9" style="left:176.50px;top:231.60px;font-size:12.5px;color:#444444;transform:scaleX(1.0024);">No.</div>
<div class="t" id="t10" style="left:272.00px;top:225.00px;font-size:12.5px;color:#444444;transform:scaleX(1.0497);">Name</div>
<div class="t" id="t11" style="left:524.30px;top:225.00px;font-size:12.5px;color:#444444;transform:scaleX(1.0346);">Job Title*</div>
<div class="t" id="t12" style="left:677.00px;top:225.00px;font-size:12.5px;color:#444444;transform:scaleX(1.0309);">Address*</div>
<div class="t" id="t13" style="left:878.80px;top:225.00px;font-size:12.5px;color:#444444;transform:scaleX(1.0869);">City*</div>
<div class="t" id="t14" style="left:1030.50px;top:225.00px;font-size:12.5px;color:#444444;transform:scaleX(1.0235);">Email</div>
<div class="t" id="t15" style="left:1233.00px;top:225.00px;font-size:12.5px;color:#444444;transform:scaleX(1.0156);">Phone No.</div>
<div class="t" id="t16" style="left:1385.00px;top:225.00px;font-size:12.5px;color:#444444;transform:scaleX(1.0251);">Language*</div>
<div class="t" id="t17" style="left:1537.00px;top:225.00px;font-size:12.5px;color:#444444;transform:scaleX(1.0759);">Attachmen</div>
<div class="t" id="t18" style="left:1637.50px;top:212.60px;font-size:12.5px;color:#444444;transform:scaleX(1.0849);">Country</div>
<div class="t" id="t19" style="left:1637.50px;top:225.70px;font-size:12.5px;color:#444444;transform:scaleX(1.0095);">Region</div>
<div class="t" id="t20" style="left:1637.50px;top:238.80px;font-size:12.5px;color:#444444;transform:scaleX(1.0037);">Code</div>
<div class="t" id="t21" style="left:1738.80px;top:225.00px;font-size:12.5px;color:#444444;transform:scaleX(1.0849);">Country</div>
<div class="t" id="t22" style="left:175.90px;top:272.00px;font-size:13.5px;color:#5f5f5f;transform:scaleX(0.9580);">CT100181</div>
<div class="t" id="t23" style="left:271.00px;top:272.00px;font-size:13.5px;color:#5f5f5f;transform:scaleX(1.0900);">Antonio Bermejo</div>
<div class="t" id="t24" style="left:676.40px;top:272.00px;font-size:13.5px;color:#5f5f5f;transform:scaleX(1.0575);">c/ Neptuno 18</div>
<div class="t" id="t25" style="left:878.00px;top:272.00px;font-size:13.5px;color:#5f5f5f;transform:scaleX(1.0260);">Salamanca</div>
<div class="t" id="t26" style="left:1030.60px;top:272.00px;font-size:13.5px;color:#4480e3;transform:scaleX(1.0405);">antonio.bermejo@contoso</div>
<div class="t" id="t27" style="left:1195.40px;top:272.00px;font-size:13.5px;color:#9c9c9c;transform:scaleX(0.8255);">...</div>
<div class="t" id="t28" style="left:1384.10px;top:272.00px;font-size:13.5px;color:#5f5f5f;transform:scaleX(0.9883);">ESP</div>
<div class="t" id="t29" style="left:1636.50px;top:272.00px;font-size:13.5px;color:#5f5f5f;transform:scaleX(1.0158);">ES</div>
<div class="t" id="t30" style="left:175.90px;top:305.80px;font-size:13.5px;color:#5f5f5f;transform:scaleX(1.0611);">CT000128</div>
<div class="t" id="t31" style="left:271.00px;top:305.80px;font-size:13.5px;color:#5f5f5f;transform:scaleX(1.0745);">London Postmaster</div>
<div class="t" id="t32" style="left:676.40px;top:305.80px;font-size:13.5px;color:#5f5f5f;transform:scaleX(1.0640);">10 North Lake Avenue</div>
<div class="t" id="t33" style="left:878.00px;top:305.80px;font-size:13.5px;color:#5f5f5f;transform:scaleX(1.0718);">London</div>
<div class="t" id="t34" style="left:1030.60px;top:305.80px;font-size:13.5px;color:#4480e3;transform:scaleX(1.0374);">london.postmaster@conto</div>
<div class="t" id="t35" style="left:1194.90px;top:305.80px;font-size:13.5px;color:#9c9c9c;transform:scaleX(0.8255);">...</div>
<div class="t" id="t36" style="left:1384.10px;top:305.80px;font-size:13.5px;color:#5f5f5f;transform:scaleX(1.0319);">ENG</div>
<div class="t" id="t37" style="left:1636.50px;top:305.80px;font-size:13.5px;color:#5f5f5f;transform:scaleX(1.0146);">GB</div>
<div class="t" id="t38" style="left:175.90px;top:339.60px;font-size:13.5px;color:#5f5f5f;transform:scaleX(1.0611);">CT200105</div>
<div class="t" id="t39" style="left:271.00px;top:339.60px;font-size:13.5px;color:#5f5f5f;transform:scaleX(1.0860);">Henning Serritslev</div>
<div class="t" id="t40" style="left:676.40px;top:339.60px;font-size:13.5px;color:#5f5f5f;transform:scaleX(1.0618);">Strandvejen 334</div>
<div class="t" id="t41" style="left:878.00px;top:339.60px;font-size:13.5px;color:#5f5f5f;transform:scaleX(1.0521);">Vedbaek</div>
<div class="t" id="t42" style="left:1030.60px;top:339.60px;font-size:13.5px;color:#4480e3;transform:scaleX(1.0339);">henning.serritslev@contos</div>
<div class="t" id="t43" style="left:1195.90px;top:339.60px;font-size:13.5px;color:#9c9c9c;transform:scaleX(0.8255);">...</div>
<div class="t" id="t44" style="left:1384.10px;top:339.60px;font-size:13.5px;color:#5f5f5f;transform:scaleX(1.1117);">DAN</div>
<div class="t" id="t45" style="left:1636.50px;top:339.60px;font-size:13.5px;color:#5f5f5f;transform:scaleX(1.0818);">DK</div>
<div class="t" id="t46" style="left:175.90px;top:373.40px;font-size:13.5px;color:#5f5f5f;transform:scaleX(1.1166);">CT000202</div>
<div class="t" id="t47" style="left:271.00px;top:373.40px;font-size:13.5px;color:#5f5f5f;transform:scaleX(1.0636);">KKA Büromaschinen Gmbh</div>
<div class="t" id="t48" style="left:676.40px;top:373.40px;font-size:13.5px;color:#5f5f5f;transform:scaleX(1.0725);">Immermannstraße 92</div>
<div class="t" id="t49" style="left:878.00px;top:373.40px;font-size:13.5px;color:#5f5f5f;transform:scaleX(1.0499);">Landsberg am Lech</div>
<div class="t" id="t50" style="left:1030.60px;top:373.40px;font-size:13.5px;color:#4480e3;transform:scaleX(1.0201);">kka.buromaschinen.gmbh</div>
<div class="t" id="t51" style="left:1188.90px;top:373.40px;font-size:13.5px;color:#9c9c9c;transform:scaleX(0.8255);">...</div>
<div class="t" id="t52" style="left:1384.10px;top:373.40px;font-size:13.5px;color:#5f5f5f;transform:scaleX(1.0591);">DEU</div>
<div class="t" id="t53" style="left:1636.50px;top:373.40px;font-size:13.5px;color:#5f5f5f;transform:scaleX(1.0551);">DE</div>
<div class="t" id="t54" style="left:175.90px;top:407.20px;font-size:13.5px;color:#5f5f5f;transform:scaleX(1.0690);">CT000154</div>
<div class="t" id="t55" style="left:271.00px;top:407.20px;font-size:13.5px;color:#5f5f5f;transform:scaleX(1.0468);">Overschrijd de Grens SA</div>
<div class="t" id="t56" style="left:676.40px;top:407.20px;font-size:13.5px;color:#5f5f5f;transform:scaleX(1.0660);">Boomgaardstraat 55</div>
<div class="t" id="t57" style="left:878.00px;top:407.20px;font-size:13.5px;color:#5f5f5f;transform:scaleX(1.1020);">Kortrijk</div>
<div class="t" id="t58" style="left:1030.60px;top:407.20px;font-size:13.5px;color:#4480e3;transform:scaleX(0.9921);">overschrijd.de.grens.sa@co</div>
<div class="t" id="t59" style="left:1197.40px;top:407.20px;font-size:13.5px;color:#9c9c9c;transform:scaleX(0.8255);">...</div>
<div class="t" id="t60" style="left:1384.10px;top:407.20px;font-size:13.5px;color:#5f5f5f;transform:scaleX(1.1117);">NLB</div>
<div class="t" id="t61" style="left:1636.50px;top:407.20px;font-size:13.5px;color:#5f5f5f;transform:scaleX(1.0435);">BE</div>
<div class="t" id="t62" style="left:175.90px;top:441.00px;font-size:13.5px;color:#5f5f5f;transform:scaleX(1.0611);">CT000122</div>
<div class="t" id="t63" style="left:271.00px;top:441.00px;font-size:13.5px;color:#5f5f5f;transform:scaleX(1.0676);">Francematic</div>
<div class="t" id="t64" style="left:676.40px;top:441.00px;font-size:13.5px;color:#5f5f5f;transform:scaleX(1.0435);">19 Boulevard Commanderie</div>
<div class="t" id="t65" style="left:878.00px;top:441.00px;font-size:13.5px;color:#5f5f5f;transform:scaleX(1.0197);">PLAISIR</div>
<div class="t" id="t66" style="left:1030.60px;top:441.00px;font-size:13.5px;color:#4480e3;transform:scaleX(1.0448);">francematic@contoso.com</div>
<div class="t" id="t67" style="left:1384.10px;top:441.00px;font-size:13.5px;color:#5f5f5f;transform:scaleX(1.0444);">FRA</div>
<div class="t" id="t68" style="left:1636.50px;top:441.00px;font-size:13.5px;color:#5f5f5f;transform:scaleX(1.0167);">FR</div>
<div class="t" id="t69" style="left:175.90px;top:474.80px;font-size:13.5px;color:#5f5f5f;transform:scaleX(1.1008);">CT000223</div>
<div class="t" id="t70" style="left:271.00px;top:474.80px;font-size:13.5px;color:#5f5f5f;transform:scaleX(1.0430);">Mr. Sean P. Alexander</div>
<div class="t" id="t71" style="left:676.40px;top:474.80px;font-size:13.5px;color:#5f5f5f;transform:scaleX(1.0408);">1 Sherwood Heights Dr.</div>
<div class="t" id="t72" style="left:878.00px;top:474.80px;font-size:13.5px;color:#5f5f5f;transform:scaleX(1.0580);">Oakville</div>
<div class="t" id="t73" style="left:1030.60px;top:474.80px;font-size:13.5px;color:#4480e3;transform:scaleX(0.9979);">mr.sean.p.alexander@cont</div>
<div class="t" id="t74" style="left:1192.40px;top:474.80px;font-size:13.5px;color:#9c9c9c;transform:scaleX(0.8255);">...</div>
<div class="t" id="t75" style="left:1384.10px;top:474.80px;font-size:13.5px;color:#5f5f5f;transform:scaleX(1.0415);">ENC</div>
<div class="t" id="t76" style="left:1636.50px;top:474.80px;font-size:13.5px;color:#5f5f5f;transform:scaleX(1.0818);">CA</div>
<div class="t" id="t77" style="left:175.90px;top:508.60px;font-size:13.5px;color:#5f5f5f;transform:scaleX(1.0056);">CT100156</div>
<div class="t" id="t78" style="left:271.00px;top:508.60px;font-size:13.5px;color:#5f5f5f;transform:scaleX(1.0246);">John Emory</div>
<div class="t" id="t79" style="left:676.40px;top:508.60px;font-size:13.5px;color:#5f5f5f;transform:scaleX(1.0311);">192 Market Square</div>
<div class="t" id="t80" style="left:878.00px;top:508.60px;font-size:13.5px;color:#5f5f5f;transform:scaleX(1.0801);">Birmingham</div>
<div class="t" id="t81" style="left:1030.60px;top:508.60px;font-size:13.5px;color:#4480e3;transform:scaleX(1.0329);">john.emory@contoso.com</div>
<div class="t" id="t82" style="left:1384.10px;top:508.60px;font-size:13.5px;color:#5f5f5f;transform:scaleX(1.0319);">ENG</div>
<div class="t" id="t83" style="left:1636.50px;top:508.60px;font-size:13.5px;color:#5f5f5f;transform:scaleX(1.0146);">GB</div>
<div class="t" id="t84" style="left:175.90px;top:542.40px;font-size:13.5px;color:#5f5f5f;transform:scaleX(1.0770);">CT200001</div>
<div class="t" id="t85" style="left:271.00px;top:542.40px;font-size:13.5px;color:#5f5f5f;transform:scaleX(1.0890);">Andy Teal</div>
<div class="t" id="t86" style="left:676.40px;top:542.40px;font-size:13.5px;color:#5f5f5f;transform:scaleX(1.0534);">1120 Newport Ave</div>
<div class="t" id="t87" style="left:878.00px;top:542.40px;font-size:13.5px;color:#5f5f5f;transform:scaleX(1.0816);">Manchester</div>
<div class="t" id="t88" style="left:1030.60px;top:542.40px;font-size:13.5px;color:#4480e3;transform:scaleX(1.0185);">andy.teal@contoso.com</div>
<div class="t" id="t89" style="left:1384.10px;top:542.40px;font-size:13.5px;color:#5f5f5f;transform:scaleX(1.0319);">ENG</div>
<div class="t" id="t90" style="left:1636.50px;top:542.40px;font-size:13.5px;color:#5f5f5f;transform:scaleX(1.0146);">GB</div>
<div class="t" id="t91" style="left:175.90px;top:576.20px;font-size:13.5px;color:#5f5f5f;transform:scaleX(1.1087);">CT000248</div>
<div class="t" id="t92" style="left:271.00px;top:576.20px;font-size:13.5px;color:#5f5f5f;transform:scaleX(1.0388);">Cronus Cardoxy Sales</div>
<div class="t" id="t93" style="left:676.40px;top:576.20px;font-size:13.5px;color:#5f5f5f;transform:scaleX(1.0564);">Ligeudvej 24</div>
<div class="t" id="t94" style="left:878.00px;top:576.20px;font-size:13.5px;color:#5f5f5f;transform:scaleX(1.0449);">Copenhagen</div>
<div class="t" id="t95" style="left:1030.60px;top:576.20px;font-size:13.5px;color:#4480e3;transform:scaleX(1.0101);">cronus.cardoxy.sales@cont</div>
<div class="t" id="t96" style="left:1197.90px;top:576.20px;font-size:13.5px;color:#9c9c9c;transform:scaleX(0.8255);">...</div>
<div class="t" id="t97" style="left:1384.10px;top:576.20px;font-size:13.5px;color:#5f5f5f;transform:scaleX(1.1117);">DAN</div>
<div class="t" id="t98" style="left:1636.50px;top:576.20px;font-size:13.5px;color:#5f5f5f;transform:scaleX(1.0818);">DK</div>
<div class="t" id="t99" style="left:175.90px;top:610.00px;font-size:13.5px;color:#5f5f5f;transform:scaleX(1.0135);">CT100139</div>
<div class="t" id="t100" style="left:271.00px;top:610.00px;font-size:13.5px;color:#5f5f5f;transform:scaleX(1.0196);">Katie Jordan</div>
<div class="t" id="t101" style="left:676.40px;top:610.00px;font-size:13.5px;color:#5f5f5f;transform:scaleX(1.0768);">395 Westgate Drive</div>
<div class="t" id="t102" style="left:878.00px;top:610.00px;font-size:13.5px;color:#5f5f5f;transform:scaleX(1.1135);">Atlanta</div>
<div class="t" id="t103" style="left:1030.60px;top:610.00px;font-size:13.5px;color:#4480e3;transform:scaleX(1.0228);">katie.jordan@contoso.com</div>
<div class="t" id="t104" style="left:1384.10px;top:610.00px;font-size:13.5px;color:#5f5f5f;transform:scaleX(1.0941);">ENU</div>
<div class="t" id="t105" style="left:1636.50px;top:610.00px;font-size:13.5px;color:#5f5f5f;transform:scaleX(1.0551);">US</div>
<div class="t" id="t106" style="left:175.90px;top:643.80px;font-size:13.5px;color:#5f5f5f;transform:scaleX(1.0299);">CT000117</div>
<div class="t" id="t107" style="left:271.00px;top:643.80px;font-size:13.5px;color:#5f5f5f;transform:scaleX(1.0629);">Mr. Derik Stenerson</div>
<div class="t" id="t108" style="left:676.40px;top:643.80px;font-size:13.5px;color:#5f5f5f;transform:scaleX(1.0582);">2 Beta Street</div>
<div class="t" id="t109" style="left:878.00px;top:643.80px;font-size:13.5px;color:#5f5f5f;transform:scaleX(1.0875);">Carletonville</div>
<div class="t" id="t110" style="left:1030.60px;top:643.80px;font-size:13.5px;color:#4480e3;transform:scaleX(1.0248);">mr.derik.stenerson@conto</div>
<div class="t" id="t111" style="left:1192.90px;top:643.80px;font-size:13.5px;color:#9c9c9c;transform:scaleX(0.8255);">...</div>
<div class="t" id="t112" style="left:1384.10px;top:643.80px;font-size:13.5px;color:#5f5f5f;transform:scaleX(1.0941);">ENU</div>
<div class="t" id="t113" style="left:1636.50px;top:643.80px;font-size:13.5px;color:#5f5f5f;transform:scaleX(1.2047);">ZA</div>
<div class="t" id="t114" style="left:175.90px;top:677.60px;font-size:13.5px;color:#5f5f5f;transform:scaleX(1.0539);">CT00003...</div>
<div class="t" id="t115" style="left:271.00px;top:677.60px;font-size:13.5px;color:#5f5f5f;transform:scaleX(1.0821);">Helguera industrial</div>
<div class="t" id="t116" style="left:676.40px;top:677.60px;font-size:13.5px;color:#5f5f5f;transform:scaleX(1.0229);">c/ Paz 5</div>
<div class="t" id="t117" style="left:878.00px;top:677.60px;font-size:13.5px;color:#5f5f5f;transform:scaleX(1.0856);">Madrid</div>
<div class="t" id="t118" style="left:1030.60px;top:677.60px;font-size:13.5px;color:#4480e3;transform:scaleX(1.0327);">helguera.industrial@conto</div>
<div class="t" id="t119" style="left:1193.40px;top:677.60px;font-size:13.5px;color:#9c9c9c;transform:scaleX(0.8255);">...</div>
<div class="t" id="t120" style="left:1384.10px;top:677.60px;font-size:13.5px;color:#5f5f5f;transform:scaleX(0.9883);">ESP</div>
<div class="t" id="t121" style="left:1636.50px;top:677.60px;font-size:13.5px;color:#5f5f5f;transform:scaleX(1.0158);">ES</div>
<div class="t" id="t122" style="left:175.90px;top:711.40px;font-size:13.5px;color:#5f5f5f;transform:scaleX(1.0770);">CT000051</div>
<div class="t" id="t123" style="left:271.00px;top:711.40px;font-size:13.5px;color:#5f5f5f;transform:scaleX(1.0395);">Centromerkur d.o.o.</div>
<div class="t" id="t124" style="left:676.40px;top:711.40px;font-size:13.5px;color:#5f5f5f;transform:scaleX(1.0543);">Tabor 23</div>
<div class="t" id="t125" style="left:878.00px;top:711.40px;font-size:13.5px;color:#5f5f5f;transform:scaleX(1.1100);">Maribor</div>
<div class="t" id="t126" style="left:1030.60px;top:711.40px;font-size:13.5px;color:#4480e3;transform:scaleX(1.0357);">centromerkur.doo@contos</div>
<div class="t" id="t127" style="left:1195.40px;top:711.40px;font-size:13.5px;color:#9c9c9c;transform:scaleX(0.8255);">...</div>
<div class="t" id="t128" style="left:1384.10px;top:711.40px;font-size:13.5px;color:#5f5f5f;transform:scaleX(1.0483);">SLV</div>
<div class="t" id="t129" style="left:1636.50px;top:711.40px;font-size:13.5px;color:#5f5f5f;transform:scaleX(0.9635);">SI</div>
<div class="t" id="t130" style="left:175.90px;top:745.20px;font-size:13.5px;color:#5f5f5f;transform:scaleX(1.0294);">CT000161</div>
<div class="t" id="t131" style="left:271.00px;top:745.20px;font-size:13.5px;color:#5f5f5f;transform:scaleX(1.0561);">Sr. Tomas Navarro</div>
<div class="t" id="t132" style="left:676.40px;top:745.20px;font-size:13.5px;color:#5f5f5f;transform:scaleX(1.0233);">Av. Palmeras 5</div>
<div class="t" id="t133" style="left:878.00px;top:745.20px;font-size:13.5px;color:#5f5f5f;transform:scaleX(1.0993);">Alicante</div>
<div class="t" id="t134" style="left:1030.60px;top:745.20px;font-size:13.5px;color:#4480e3;transform:scaleX(1.0289);">sr.tomas.navarro@contoso</div>
<div class="t" id="t135" style="left:1197.40px;top:745.20px;font-size:13.5px;color:#9c9c9c;transform:scaleX(0.8255);">...</div>
<div class="t" id="t136" style="left:1384.10px;top:745.20px;font-size:13.5px;color:#5f5f5f;transform:scaleX(0.9883);">ESP</div>
<div class="t" id="t137" style="left:1636.50px;top:745.20px;font-size:13.5px;color:#5f5f5f;transform:scaleX(1.0158);">ES</div>
<div class="t" id="t138" style="left:175.90px;top:779.00px;font-size:13.5px;color:#5f5f5f;transform:scaleX(1.0770);">CT000164</div>
<div class="t" id="t139" style="left:271.00px;top:779.00px;font-size:13.5px;color:#5f5f5f;transform:scaleX(1.0903);">Hurdir HF</div>
<div class="t" id="t140" style="left:676.40px;top:779.00px;font-size:13.5px;color:#5f5f5f;transform:scaleX(1.0012);">Skeifunni 13</div>
<div class="t" id="t141" style="left:878.00px;top:779.00px;font-size:13.5px;color:#5f5f5f;transform:scaleX(1.0352);">Reykjavik</div>
<div class="t" id="t142" style="left:1030.60px;top:779.00px;font-size:13.5px;color:#4480e3;transform:scaleX(1.0372);">hurdir.hf@contoso.com</div>
<div class="t" id="t143" style="left:1384.10px;top:779.00px;font-size:13.5px;color:#5f5f5f;transform:scaleX(1.0214);">ISL</div>
<div class="t" id="t144" style="left:1636.50px;top:779.00px;font-size:13.5px;color:#5f5f5f;transform:scaleX(1.0027);">IS</div>
<div class="t" id="t145" style="left:170.00px;top:845.80px;font-size:13px;color:#444444;transform:scaleX(0.8000);">1</div>
<div class="t" id="t146" style="left:298.20px;top:845.80px;font-size:13px;color:#757575;transform:scaleX(1.0773);">1 - 20 of 538 items</div>
<div class="t" id="t147" style="left:479.20px;top:844.80px;font-size:13px;color:#808080;transform:scaleX(1.0920);">20</div>
<div class="t" id="t148" style="left:66.20px;top:905.50px;font-size:12px;color:#3a63c9;transform:scaleX(1.0030);">Contacts</div>
<div class="t" id="t149" style="left:192.00px;top:948.00px;font-size:12px;color:#2b7ae2;transform:scaleX(0.9902);">© 2021 Xpand. All rights reserved.</div>
</body></html>
